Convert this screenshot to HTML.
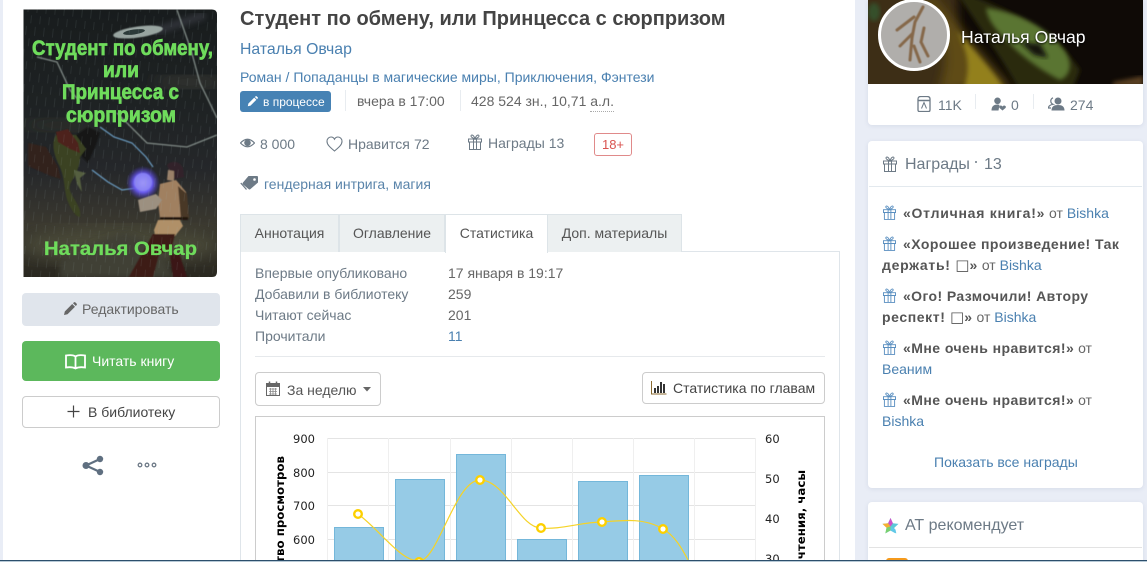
<!DOCTYPE html>
<html lang="ru"><head><meta charset="utf-8"><title>Студент по обмену</title>
<style>
html,body{margin:0;padding:0;width:1147px;height:562px;overflow:hidden}
body{background:#e9edf6;font:14px "Liberation Sans","DejaVu Sans",sans-serif;color:#666}
#w{position:relative;width:1147px;height:562px;overflow:clip}
.a{position:absolute;white-space:nowrap;line-height:20px}
.l{color:#4a80b0}
.g{color:#6d7a86}
svg{position:absolute;overflow:hidden}
.box{position:absolute;box-sizing:border-box}
.tab{position:absolute;top:214px;height:38px;box-sizing:border-box;background:#ecf0f1;border:1px solid #dde4e8;border-bottom:0;line-height:37px;text-align:center;color:#555}
b{color:#555;letter-spacing:.45px}
.t{font:400 15px/1 "DejaVu Sans",sans-serif;letter-spacing:0}
</style></head><body><div id="w">
<div class="box" style="left:3px;top:0;width:852px;height:562px;background:#fff"></div>

<!-- cover -->
<svg style="left:0;top:0" width="240" height="290" viewBox="0 0 240 290">
<defs>
<linearGradient id="cg" x1="0" y1="0" x2="0" y2="1"><stop offset="0" stop-color="#181c1d"/><stop offset=".35" stop-color="#1e2223"/><stop offset=".6" stop-color="#25272a"/><stop offset=".8" stop-color="#3a382f"/><stop offset="1" stop-color="#2a2820"/></linearGradient>
<radialGradient id="orb"><stop offset="0" stop-color="#c8bcff"/><stop offset=".55" stop-color="#6a5cf0"/><stop offset="1" stop-color="#4030b0" stop-opacity="0"/></radialGradient>
<clipPath id="cc"><path d="M23.500 9.500H212q5 0 5 5V272q0 5-5 5H23.500z"/></clipPath>
<filter id="b1"><feGaussianBlur stdDeviation=".5"/></filter>
<filter id="b3"><feGaussianBlur stdDeviation="3"/></filter>
<filter id="b8"><feGaussianBlur stdDeviation="8"/></filter>
<pattern id="rain" width="9" height="23" patternUnits="userSpaceOnUse" patternTransform="rotate(6)"><path d="M2 0v9M6 12v8" stroke="#9aa" stroke-width=".5" opacity=".22"/></pattern>
</defs>
<g clip-path="url(#cc)">
<rect x="23" y="9" width="195" height="269" fill="url(#cg)"/>
<ellipse cx="120" cy="245" rx="100" ry="18" fill="#4a4838" filter="url(#b8)"/>
<ellipse cx="190" cy="82" rx="36" ry="6" fill="#3b3a34" filter="url(#b8)"/>
<ellipse cx="60" cy="125" rx="40" ry="6" fill="#2f302c" filter="url(#b8)"/>
<path d="M60 262l35-20 30-10 30 12 20 34H60z" fill="#403f36" filter="url(#b3)"/>
<path d="M150 33l55-18" stroke="#667" stroke-width="8" opacity=".3" filter="url(#b3)"/>
<ellipse cx="138" cy="32" rx="25" ry="5.500" fill="#98a4a0" transform="rotate(-8 138 32)" filter="url(#b1)"/>
<ellipse cx="134" cy="32" rx="11" ry="2.500" fill="#2c3a39" transform="rotate(-8 134 32)"/>
<g fill="none" filter="url(#b1)">
<path d="M37 57l20 5 13 28 10 12M117 113l30 30 40 4 30-12M177 10l14 40 9 33 17 35" stroke="#7f8985" stroke-width="1.300"/>
<path d="M100 127l14 10 18 6 14 14 7 10 M92 170l16 12 14 8 14-2" stroke="#6a9cc2" stroke-width="1.200"/>
</g>
<g filter="url(#b1)">
<path d="M28 143l18 4 12 20 3 12-10-3-23-10z" fill="#33201a"/>
<path d="M76 135l12-8 12 6-4 12-8 18-6-6-4-14z" fill="#141516"/>
<path d="M56 135c-5 8-2 20 3 30 6 12 5 24 8 34 3 9 9 18 13 18 2-9-7-18-10-26-2-9 5-12 7-20 2-6 3-9 3-14l6-8-10-14z" fill="#3b4320"/>
<path d="M56 132l12-3 10 14 2 10-10-4-12-7z" fill="#4e221c"/>
<path d="M74 170l12 3-6 5 2 14-5-8z" fill="#555f40"/>
<circle cx="143" cy="183" r="17" fill="url(#orb)"/>
<circle cx="143" cy="182" r="9" fill="#8d88f4" opacity=".75"/>
<path d="M167 165c4-5 13-4 16 3l1 9-9 2-4-4z" fill="#33242a"/>
<path d="M168 170l6 1 0 10-7-1z" fill="#9a8068"/>
<path d="M160 184l16-4 10 12 2 26-28 1-2-18z" fill="#a08060"/>
<path d="M178 186l9 8 2 24-8 1z" fill="#4a3826"/>
<path d="M138 200l18-6 6 6-6 9-16 3z" fill="#9c9080"/>
<path d="M160 217h28v3h-28z" fill="#221710"/>
<path d="M158 220h22l3 6-8 10-20-1 -1-5z" fill="#b09068"/>
<path d="M153 234h22l-4 16-12 4-6 23h-24z" fill="#3c1a16"/>
<path d="M170 255l9-2 8 24h-14z" fill="#3a1612"/>
</g>
<rect x="23" y="9" width="195" height="269" fill="url(#rain)"/>
<g font-family="'Liberation Sans',sans-serif" font-weight="700" fill="#6fdc5c" stroke="#6fdc5c" stroke-width=".7">
<text x="32" y="55" font-size="21" textLength="181" lengthAdjust="spacingAndGlyphs">Студент по обмену,</text>
<text x="103" y="77" font-size="21" textLength="36" lengthAdjust="spacingAndGlyphs">или</text>
<text x="62" y="99" font-size="21" textLength="117" lengthAdjust="spacingAndGlyphs">Принцесса с</text>
<text x="66" y="122" font-size="21" textLength="110" lengthAdjust="spacingAndGlyphs">сюрпризом</text>
<text x="44" y="255" font-size="19" stroke-width=".3" textLength="153" lengthAdjust="spacingAndGlyphs">Наталья Овчар</text>
</g>
</g>
</svg>

<!-- left buttons -->
<div class="box" style="left:22px;top:293px;width:198px;height:33px;background:#e0e5ec;border-radius:4px"></div>
<svg style="left:63px;top:302px" width="14" height="14" viewBox="0 0 14 14"><path d="M1 13l.8-3.500L9.200 2 12 4.800l-7.500 7.400zM10 1.200l1-.9q.6-.4 1.200 0l1.500 1.500q.4.6 0 1.200l-.9 1z" fill="#666"/></svg>
<div class="a" style="left:82px;top:299px;color:#666">Редактировать</div>
<div class="box" style="left:22px;top:341px;width:198px;height:40px;background:#5cb85c;border-radius:4px"></div>
<svg style="left:65px;top:354px" width="21" height="16" viewBox="0 0 21 16"><path d="M10.500 2.500C8.500 1 5 .8 1 1.500V13.500c4-.6 7-.4 9.500 1 2.500-1.400 5.500-1.600 9.500-1V1.500c-4-.7-7.500-.5-9.500 1zM10.500 2.500V14.500" fill="none" stroke="#fff" stroke-width="1.800"/></svg>
<div class="a" style="left:92px;top:351px;color:#fff">Читать книгу</div>
<div class="box" style="left:22px;top:396px;width:198px;height:32px;background:#fff;border:1px solid #ccc;border-radius:4px"></div>
<svg style="left:67px;top:405px" width="13" height="13" viewBox="0 0 13 13"><path d="M6.500 .5v12M.5 6.500h12" stroke="#444" stroke-width="1.200"/></svg>
<div class="a" style="left:88px;top:402px;color:#444">В библиотеку</div>
<svg style="left:81px;top:454px" width="24" height="24" viewBox="0 0 24 24"><path d="M19 5L5 11.500 19 18" fill="none" stroke="#5f6f80" stroke-width="2.200"/><circle cx="19" cy="5" r="3.200" fill="#5f6f80"/><circle cx="5" cy="11.500" r="3.500" fill="#5f6f80"/><circle cx="19" cy="18" r="3.200" fill="#5f6f80"/></svg>
<svg style="left:137px;top:461px" width="20" height="8" viewBox="0 0 20 8"><g fill="none" stroke="#6f7b88" stroke-width="1.300"><circle cx="3" cy="4" r="1.800"/><circle cx="10" cy="4" r="1.800"/><circle cx="17" cy="4" r="1.800"/></g></svg>

<!-- header text -->
<div class="a" style="left:240px;top:8px;font-size:20px;font-weight:700;color:#444;line-height:23px">Студент по обмену, или Принцесса с сюрпризом</div>
<div class="a l" style="left:240px;top:40px;font-size:15.800px">Наталья Овчар</div>
<div class="a l" style="left:240px;top:67px;font-size:14px">Роман / Попаданцы в магические миры, Приключения, Фэнтези</div>
<div class="box" style="left:240px;top:91px;width:91px;height:21px;background:#4682b4;border-radius:3px"></div>
<svg style="left:247px;top:96px" width="11" height="11" viewBox="0 0 14 14"><path d="M1 13l.8-3.500L9.200 2 12 4.800l-7.500 7.400zM10 1.200l1-.9q.6-.4 1.200 0l1.500 1.500q.4.6 0 1.200l-.9 1z" fill="#fff"/></svg>
<div class="a" style="left:263px;top:92px;font-size:12px;color:#fff">в процессе</div>
<div class="box" style="left:345px;top:90px;width:1px;height:21px;background:#e8ecf0"></div>
<div class="a" style="left:357px;top:91px;color:#666">вчера в 17:00</div>
<div class="box" style="left:460px;top:90px;width:1px;height:21px;background:#e8ecf0"></div>
<div class="a" style="left:471px;top:91px;color:#666">428 524 зн., 10,71 <span style="border-bottom:1px dotted #aaa;padding-bottom:2px">а.л.</span></div>

<!-- stats row -->
<svg style="left:240px;top:136px" width="15" height="14" viewBox="0 0 15 14"><path d="M.5 7Q7.500-.5 14.500 7 7.500 14.500.5 7z" fill="none" stroke="#6d7a86" stroke-width="1.200"/><circle cx="7.500" cy="6.800" r="3.300" fill="#6d7a86"/></svg>
<div class="a g" style="left:260px;top:134px">8 000</div>
<svg style="left:326px;top:136px" width="17" height="16" viewBox="0 0 17 16"><path d="M8.500 15C3 10.500 1 8.300 1 5.200 1 2.800 2.800 1 5 1c1.500 0 2.800.8 3.500 2.200C9.200 1.800 10.500 1 12 1c2.200 0 4 1.800 4 4.200 0 3.100-2 5.300-7.500 9.800z" fill="none" stroke="#6d7a86" stroke-width="1.100"/></svg>
<div class="a g" style="left:348px;top:134px">Нравится</div><div class="a g" style="left:414px;top:134px">72</div>
<svg style="left:468px;top:134px" width="14" height="16" viewBox="0 0 14 16"><g fill="none" stroke="#6d7a86"><path d="M.5 5h13v3H.5zM1.500 8v7.500h11V8M5.500 5v10.500M8.500 5v10.500M7 5C5 4 3 3.500 3 2S5.500.2 7 5zM7 5c2-1 4-1.500 4-3S8.500.2 7 5z"/></g></svg>
<div class="a g" style="left:488px;top:133px">Награды 13</div>
<div class="box" style="left:594px;top:133px;width:38px;height:23px;border:1px solid #e08a8a;border-radius:3px;color:#d9534f;text-align:center;line-height:22px;font-size:13px">18+</div>
<svg style="left:240px;top:175px" width="19" height="16" viewBox="0 0 19 16"><path d="M8.500 1H17q1 0 1 1v5.500L10.500 14q-1 1-2 0L3 9.500q-.8-1 0-2z" fill="#6d7a86"/><path d="M.8 8l5.700 6.500" stroke="#6d7a86" stroke-width="1.300"/><circle cx="14.500" cy="4.500" r="1.300" fill="#fff"/></svg>
<div class="a" style="left:264px;top:174px;color:#5a84aa">гендерная интрига, магия</div>

<!-- tabs -->
<div class="box" style="left:240px;top:251px;width:600px;height:311px;border:1px solid #dfe5ea;border-bottom:0;background:#fff"></div>
<div class="tab" style="left:240px;width:99px">Аннотация</div>
<div class="tab" style="left:339px;width:106px">Оглавление</div>
<div class="tab" style="left:445px;width:103px;background:#fff;height:39px">Статистика</div>
<div class="tab" style="left:547px;width:135px">Доп. материалы</div>

<div class="a g" style="left:255px;top:263px">Впервые опубликовано</div><div class="a" style="left:448px;top:263px">17 января в 19:17</div>
<div class="a g" style="left:255px;top:284px">Добавили в библиотеку</div><div class="a" style="left:448px;top:284px">259</div>
<div class="a g" style="left:255px;top:305px">Читают сейчас</div><div class="a" style="left:448px;top:305px">201</div>
<div class="a g" style="left:255px;top:326px">Прочитали</div><div class="a l" style="left:448px;top:326px">11</div>
<div class="box" style="left:255px;top:356px;width:570px;height:1px;background:#e6e9ec"></div>

<div class="box" style="left:255px;top:372px;width:126px;height:34px;border:1px solid #ccc;border-radius:4px"></div>
<svg style="left:266px;top:381px" width="14" height="15" viewBox="0 0 14 15"><path d="M.5 2.500h13v12H.5z" fill="none" stroke="#666"/><path d="M.5 2.500h13V6H.5z" fill="#666"/><path d="M3.500 .5v3M10.500 .5v3" stroke="#666" stroke-width="1.500"/><path d="M3 8h8M3 10.500h8M3 13h8M4.500 7v7M7 7v7M9.500 7v7" stroke="#888" stroke-width=".8"/></svg>
<div class="a" style="left:287px;top:380px;color:#555">За неделю</div>
<svg style="left:363px;top:387px" width="8" height="5" viewBox="0 0 8 5"><path d="M0 0h8L4 4.500z" fill="#666"/></svg>
<div class="box" style="left:642px;top:372px;width:183px;height:32px;border:1px solid #ccc;border-radius:4px"></div>
<svg style="left:651px;top:381px" width="16" height="14" viewBox="0 0 16 14"><path d="M.5 0v13h15" fill="none" stroke="#8a6a30"/><path d="M3 7h2v5H3zM6 5h2v7H6zM9 1h2v11H9zM12 3h2v9h-2z" fill="#333"/></svg>
<div class="a" style="left:673px;top:378px;color:#444">Статистика по главам</div>

<!-- chart -->
<div class="box" style="left:255px;top:416px;width:570px;height:146px;border:1px solid #ccc;border-bottom:0"></div>
<svg style="left:0;top:0" width="1147" height="562" viewBox="0 0 1147 562">
<g stroke="#e4e4e4" stroke-width="1" fill="none">
<path d="M327 438.500H756M327 472.500H756M327 505.500H756M327 539.500H756"/>
<path stroke="#efefef" d="M327.500 438V562M388.500 438V562M450.500 438V562M511.500 438V562M572.500 438V562M633.500 438V562M694.500 438V562M755.500 438V562"/>
</g>
<g fill="#96cbe6" stroke="#74b7da">
<path d="M334.500 527.500h49V562h-49zM395.500 479.500h49V562h-49zM456.500 454.500h49V562h-49zM517.500 539.500h49V562h-49zM578.500 481.500h49V562h-49zM639.500 475.500h49V562h-49z"/>
</g>
<path d="M358 514C380 530 400 561 419 561S455 480 480 480C505 480 520 528 541 528C560 530 582 522 602 522C625 520 645 518 663 529C674 535 682 548 689 562" fill="none" stroke="#f5d327" stroke-width="1.200"/>
<g fill="#fff" stroke="#fdd000" stroke-width="2.400">
<circle cx="358" cy="514" r="3.800"/><circle cx="419" cy="562" r="3.800"/><circle cx="480" cy="480" r="3.800"/><circle cx="541" cy="528" r="3.800"/><circle cx="602" cy="522" r="3.800"/><circle cx="663" cy="529" r="3.800"/>
</g>
<g font-family="'DejaVu Sans',sans-serif" font-size="11.500" fill="#222">
<g text-anchor="end">
<text x="315" y="443">900</text><text x="315" y="477">800</text><text x="315" y="510">700</text><text x="315" y="544">600</text>
</g>
<text x="765" y="443">60</text><text x="765" y="483">50</text><text x="765" y="523">40</text><text x="765" y="563">30</text>
</g>
<g font-family="'DejaVu Sans',sans-serif" font-size="11.800" font-weight="700" fill="#000" text-anchor="end">
<text transform="translate(284 456) rotate(-90)">Количество просмотров</text>
<text transform="translate(805 470) rotate(-90)">Время чтения, часы</text>
</g>
</svg>

<!-- right card 1 -->
<div class="box" style="left:868px;top:0;width:275px;height:125px;background:#fff;border-radius:0 0 4px 4px;box-shadow:0 1px 5px rgba(80,100,140,.12)"></div>
<svg style="left:868px;top:0" width="275" height="84" viewBox="0 0 275 84">
<defs>
<filter id="b2"><feGaussianBlur stdDeviation="2"/></filter><filter id="b5"><feGaussianBlur stdDeviation="5"/></filter><filter id="b06"><feGaussianBlur stdDeviation=".6"/></filter>
<clipPath id="av"><circle cx="46" cy="35" r="34"/></clipPath>
</defs>
<rect width="275" height="84" fill="#0f0a06"/>
<rect x="-10" y="-10" width="100" height="104" fill="#3d2e12" filter="url(#b5)"/>
<path d="M65-5C85 20 115 55 145 90H70C85 60 75 25 55-5z" fill="#5e4c14" filter="url(#b5)"/>
<path d="M88 30C104 48 122 68 136 88H96C104 65 98 48 88 30z" fill="#93801f" filter="url(#b2)"/>
<path d="M100-5C140 8 190 35 212 70L205 88 150 88C135 60 120 40 90-5z" fill="#2b2a0e" filter="url(#b2)"/>
<path d="M118 8C146 12 176 24 196 50 206 64 202 76 192 80 172 70 154 56 144 46 130 32 120 22 118 8z" fill="#5a7430" filter="url(#b2)"/>
<path d="M152 42l20 2 8 14-14-3z" fill="#14140a" filter="url(#b2)"/>
<ellipse cx="6" cy="12" rx="6" ry="9" fill="#35502a" filter="url(#b2)"/>
<path d="M245 82l30-6v10h-30z" fill="#5a4020" filter="url(#b2)"/>
<circle cx="46" cy="35" r="34.500" fill="#b0aeab" stroke="#fff" stroke-width="3"/>
<g clip-path="url(#av)">
<g fill="none" stroke="#85684a" stroke-width="3" stroke-linecap="round" filter="url(#b06)"><path d="M55 7L47 22 44 38 42 60"/><path d="M29 30L46 17"/><path d="M44 34L32 46"/><path d="M56 28L53 42 60 56"/><path d="M46 46L52 62"/></g></g>
</svg>
<div class="a" style="left:961px;top:27px;font-size:17.600px;color:#fff;text-shadow:0 1px 2px #000">Наталья Овчар</div>
<svg style="left:917px;top:96px" width="14" height="16" viewBox="0 0 14 16"><path d="M1 3q0-2.500 3-2.500h6Q13 .5 13 3v11q0 1.500-1.500 1.500h-9Q1 15.500 1 14z" fill="none" stroke="#6d7a86" stroke-width="1.300"/><path d="M1 4.500h12" stroke="#6d7a86" stroke-width="1.500"/><path d="M4.500 12.500L7 6.500l2.500 6" fill="none" stroke="#6d7a86"/></svg>
<div class="a g" style="left:938px;top:95px">11K</div>
<div class="box" style="left:975px;top:94px;width:1px;height:15px;background:#e8ecf0"></div>
<svg style="left:991px;top:97px" width="15" height="14" viewBox="0 0 15 14"><circle cx="6.500" cy="3.800" r="3.300" fill="#6d7a86"/><path d="M.5 13.500c0-4 2-6 6-6 1 0 1.500.2 2 .5l-1 5.500z" fill="#6d7a86"/><path d="M11.500 13.500L8.500 11q-1-1.500.5-2.300 1.500-.5 2.500.8 1-1.300 2.500-.8 1.500.8.500 2.300z" fill="#6d7a86"/></svg>
<div class="a g" style="left:1011px;top:95px">0</div>
<div class="box" style="left:1033px;top:94px;width:1px;height:15px;background:#e8ecf0"></div>
<svg style="left:1048px;top:97px" width="17" height="14" viewBox="0 0 17 14"><circle cx="10" cy="4" r="3.500" fill="#6d7a86"/><path d="M3.500 13.500c0-4 2.500-5.500 6.500-5.500s6.500 1.500 6.500 5.500z" fill="#6d7a86"/><path d="M5 .8a3.500 3.500 0 0 0 0 6.500Q.8 8 .3 11H3" fill="none" stroke="#6d7a86" stroke-width="1.200"/></svg>
<div class="a g" style="left:1070px;top:95px">274</div>

<!-- right card 2 -->
<div class="box" style="left:868px;top:141px;width:275px;height:347px;background:#fff;border-radius:4px;box-shadow:0 1px 5px rgba(80,100,140,.12)"></div>
<svg style="left:883px;top:156px" width="14" height="16" viewBox="0 0 14 16"><g fill="none" stroke="#6d7a86"><path d="M.5 5h13v3H.5zM1.500 8v7.500h11V8M5.500 5v10.500M8.500 5v10.500M7 5C5 4 3 3.500 3 2S5.500.2 7 5zM7 5c2-1 4-1.500 4-3S8.500.2 7 5z"/></g></svg>
<div class="a g" style="left:905px;top:155px;font-size:16px">Награды</div>
<div class="box" style="left:975px;top:161px;width:2px;height:2px;background:#6d7a86;border-radius:1px"></div>
<div class="a g" style="left:984px;top:155px;font-size:16px">13</div>
<div class="box" style="left:869px;top:186px;width:273px;height:1px;background:#e3e9ee"></div>

<svg style="left:883px;top:205px" width="13" height="15" viewBox="0 0 14 16"><g fill="none" stroke="#5a8fc0"><path d="M.5 5h13v3H.5zM1.500 8v7.500h11V8M5.500 5v10.500M8.500 5v10.500M7 5C5 4 3 3.500 3 2S5.500.2 7 5zM7 5c2-1 4-1.500 4-3S8.500.2 7 5z"/></g></svg>
<div class="a" style="left:903px;top:203px"><b style="letter-spacing:.75px">«Отличная книга!»</b> от <span class="l">Bishka</span></div>
<svg style="left:883px;top:236px" width="13" height="15" viewBox="0 0 14 16"><g fill="none" stroke="#5a8fc0"><path d="M.5 5h13v3H.5zM1.500 8v7.500h11V8M5.500 5v10.500M8.500 5v10.500M7 5C5 4 3 3.500 3 2S5.500.2 7 5zM7 5c2-1 4-1.500 4-3S8.500.2 7 5z"/></g></svg>
<div class="a" style="left:903px;top:234px"><b style="letter-spacing:.47px">«Хорошее произведение! Так</b></div>
<div class="a" style="left:882px;top:255px"><b style="letter-spacing:.7px">держать! <span class="t">□</span>»</b> от <span class="l">Bishka</span></div>
<svg style="left:883px;top:288px" width="13" height="15" viewBox="0 0 14 16"><g fill="none" stroke="#5a8fc0"><path d="M.5 5h13v3H.5zM1.500 8v7.500h11V8M5.500 5v10.500M8.500 5v10.500M7 5C5 4 3 3.500 3 2S5.500.2 7 5zM7 5c2-1 4-1.500 4-3S8.500.2 7 5z"/></g></svg>
<div class="a" style="left:903px;top:286px"><b style="letter-spacing:.4px">«Ого! Размочили! Автору</b></div>
<div class="a" style="left:882px;top:307px"><b style="letter-spacing:.6px">респект! <span class="t">□</span>»</b> от <span class="l">Bishka</span></div>
<svg style="left:883px;top:340px" width="13" height="15" viewBox="0 0 14 16"><g fill="none" stroke="#5a8fc0"><path d="M.5 5h13v3H.5zM1.500 8v7.500h11V8M5.500 5v10.500M8.500 5v10.500M7 5C5 4 3 3.500 3 2S5.500.2 7 5zM7 5c2-1 4-1.500 4-3S8.500.2 7 5z"/></g></svg>
<div class="a" style="left:903px;top:338px"><b style="letter-spacing:.45px">«Мне очень нравится!»</b> от</div>
<div class="a l" style="left:882px;top:359px">Веаним</div>
<svg style="left:883px;top:392px" width="13" height="15" viewBox="0 0 14 16"><g fill="none" stroke="#5a8fc0"><path d="M.5 5h13v3H.5zM1.500 8v7.500h11V8M5.500 5v10.500M8.500 5v10.500M7 5C5 4 3 3.500 3 2S5.500.2 7 5zM7 5c2-1 4-1.500 4-3S8.500.2 7 5z"/></g></svg>
<div class="a" style="left:903px;top:390px"><b style="letter-spacing:.45px">«Мне очень нравится!»</b> от</div>
<div class="a l" style="left:882px;top:411px">Bishka</div>
<div class="a l" style="left:934px;top:452px">Показать все награды</div>

<!-- right card 3 -->
<div class="box" style="left:868px;top:502px;width:275px;height:60px;background:#fff;border-radius:4px 4px 0 0;box-shadow:0 1px 5px rgba(80,100,140,.12)"></div>
<svg style="left:882px;top:518px" width="17" height="16" viewBox="0 0 17 16"><path d="M8.500 0l2.400 5.300 5.600.6-4.200 3.800 1.200 5.700-5-2.900-5 2.900 1.200-5.700L.5 5.900l5.600-.6z" fill="#5cc8d8"/><path d="M8.500 0l2.400 5.300-2.400 3.200-2.400-3.200z" fill="#d050c8"/><path d="M.5 5.900l5.600-.6 2.400 3.200-4 1.200z" fill="#f5b030"/><path d="M8.500 8.500l5 3 .8 3.900-5.800-2.900z" fill="#60c8e8"/><path d="M8.500 8.500l-4 1.200-1.200 5.700 5.200-2.900z" fill="#7ad070"/></svg>
<div class="a g" style="left:905px;top:516px;font-size:16px">АТ рекомендует</div>
<div class="box" style="left:869px;top:547px;width:273px;height:1px;background:#e3e3e3"></div>
<div class="box" style="left:886px;top:558px;width:22px;height:4px;background:#f59a1c;border-radius:3px 3px 0 0"></div>

<!-- bottom line -->
<div class="box" style="left:0;top:560px;width:1147px;height:1px;background:#2c4f6c"></div>
<div class="box" style="left:0;top:561px;width:1147px;height:1px;background:#b7c9d6"></div>
</div></body></html>
